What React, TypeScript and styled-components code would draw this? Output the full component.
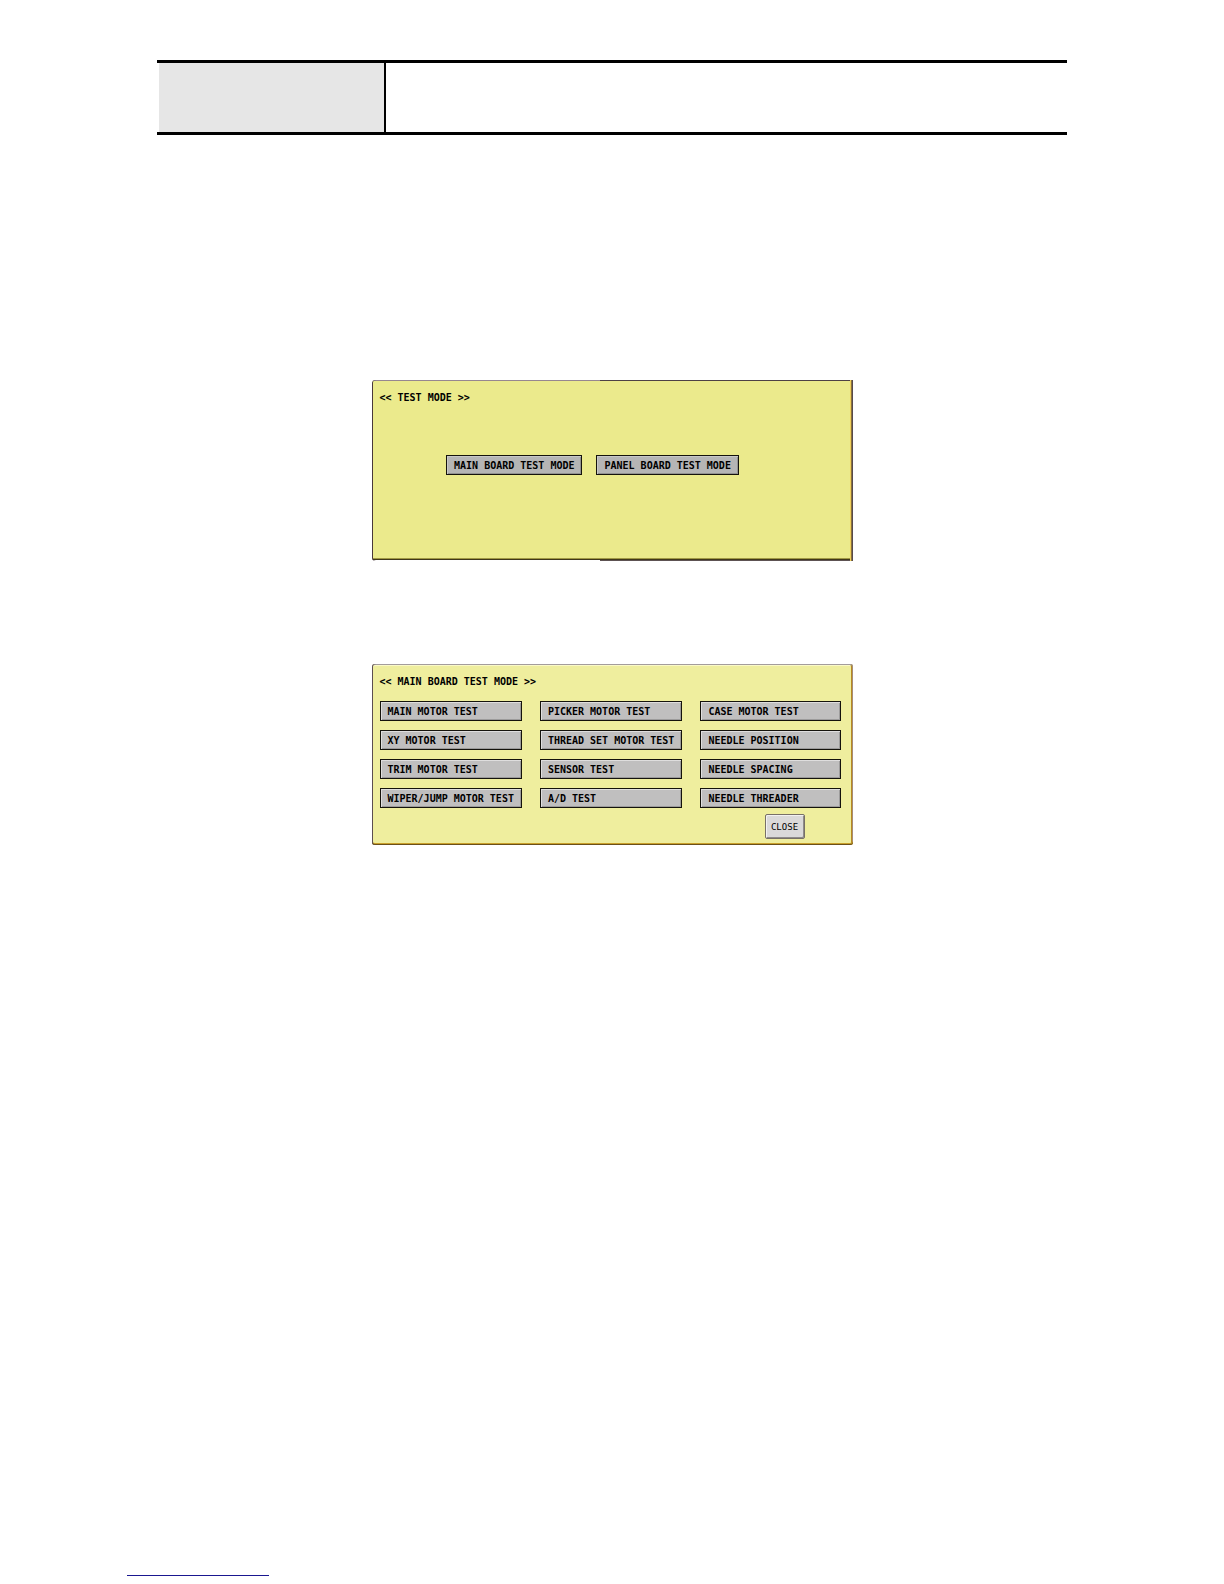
import React from "react";
import styled, { createGlobalStyle, css } from "styled-components";

const GlobalStyle = createGlobalStyle`
  *, *::before, *::after { box-sizing: border-box; }
  body { margin: 0; background: #ffffff; color: #000000; }
`;

const Page = styled.div`
  display: flex;
  flex-direction: column;
  min-height: 100vh;
  padding: 60px 24px 8px;
`;

const HeaderBar = styled.header`
  display: flex;
  width: 100%;
  max-width: 910px;
  height: 75px;
  margin: 0 auto;
  padding-left: 2px;
  border-top: 3px solid #000000;
  border-bottom: 3px solid #000000;
`;

const HeaderLabel = styled.div`
  flex: 0 0 25%;
  background: #e6e6e6;
  border-right: 2px solid #000000;
`;

const Screens = styled.main`
  display: flex;
  flex-direction: column;
  align-items: center;
  gap: 103px;
  margin-top: 245px;
`;

const Panel = styled.section<{ $split?: boolean }>`
  display: flex;
  flex-direction: column;
  width: 100%;
  max-width: 481px;
  min-height: 181px;
  padding: 9px 12px 6px 8px;
  border-radius: 3px;
  ${({ $split }) =>
    $split
      ? css`
          border-radius: 3px 0 0 3px;
          background:
            linear-gradient(90deg, #968790 228px, #4d4145 228px) top / 100% 1px no-repeat,
            linear-gradient(90deg, #ffffff 228px, #5d5252 228px) bottom / 100% 1px no-repeat,
            linear-gradient(#40371b, #40371b) 0 calc(100% - 1px) / 100% 1px no-repeat,
            linear-gradient(#a09844, #a09844) 0 calc(100% - 2px) / 100% 1px no-repeat,
            #ebea8c;
          box-shadow: inset 1px 0 #49383b, inset -1px 0 #584a4c, inset -2px 0 #8a7340, inset -3px 0 #f0cf59;
        `
      : css`
          background: #efee9e;
          box-shadow: inset 1px 0 #5c4e50, inset 0 1px #a39c9b,
            inset 0 -1px #6b511b, inset 0 -2px #c9a02a,
            inset -1px 0 #a58c79, inset -2px 0 #b98a1f, inset 0 2px #faf9c8;
        `}
`;

const PanelTitle = styled.h2`
  margin: 0;
  font: bold 10px/18px "DejaVu Sans Mono", monospace;
  white-space: pre;
`;

const ModeRow = styled.div`
  display: flex;
  justify-content: center;
  gap: 14px;
  margin-top: 48px;
  padding-right: 35px;
`;

const TestGrid = styled.div`
  display: grid;
  grid-template-columns: repeat(3, 1fr);
  gap: 9px 18px;
  margin-top: 10px;
`;

const TestButton = styled.button<{ $plain?: boolean }>`
  height: 20px;
  padding: 1px 7px 0;
  border: 1px solid #15130c;
  border-radius: 0;
  background: ${({ $plain }) => ($plain ? "#b5b5b5" : "#c0bfbf")};
  box-shadow: ${({ $plain }) =>
    $plain
      ? "inset 1px 1px #c8c8c8, inset -1px -1px #929292"
      : "inset 1px 1px #dfdede, inset -1px -1px #9c9b9b"};
  color: #000000;
  font: bold 10px/17px "DejaVu Sans Mono", monospace;
  text-align: left;
  white-space: nowrap;
`;

const CloseButton = styled.button`
  align-self: flex-end;
  width: 40px;
  height: 25px;
  margin: 6px 36px 0 0;
  padding: 0;
  border: 1px solid #777067;
  border-radius: 2px;
  background: #dad9d9;
  box-shadow: inset 1px 1px #f2f1f1, inset -1px -1px #8e8b8b;
  color: #000000;
  font: 9px/18px "DejaVu Sans Mono", monospace;
`;

const FooterLink = styled.a`
  display: block;
  width: 142px;
  height: 16px;
  margin: auto 0 0 103px;
  border-bottom: 1px solid #1a1790;
`;

const modes = ["MAIN BOARD TEST MODE", "PANEL BOARD TEST MODE"];

const tests = [
  "MAIN MOTOR TEST", "PICKER MOTOR TEST", "CASE MOTOR TEST",
  "XY MOTOR TEST", "THREAD SET MOTOR TEST", "NEEDLE POSITION",
  "TRIM MOTOR TEST", "SENSOR TEST", "NEEDLE SPACING",
  "WIPER/JUMP MOTOR TEST", "A/D TEST", "NEEDLE THREADER",
];

export default function App() {
  return (
    <>
      <GlobalStyle />
      <Page>
        <HeaderBar>
          <HeaderLabel />
        </HeaderBar>
        <Screens>
          <Panel $split>
            <PanelTitle>{"<< TEST MODE >>"}</PanelTitle>
            <ModeRow>
              {modes.map((name) => (
                <TestButton key={name} type="button" $plain>{name}</TestButton>
              ))}
            </ModeRow>
          </Panel>
          <Panel>
            <PanelTitle>{"<< MAIN BOARD TEST MODE >>"}</PanelTitle>
            <TestGrid>
              {tests.map((name) => (
                <TestButton key={name} type="button">{name}</TestButton>
              ))}
            </TestGrid>
            <CloseButton type="button">CLOSE</CloseButton>
          </Panel>
        </Screens>
        <FooterLink href="#" />
      </Page>
    </>
  );
}
